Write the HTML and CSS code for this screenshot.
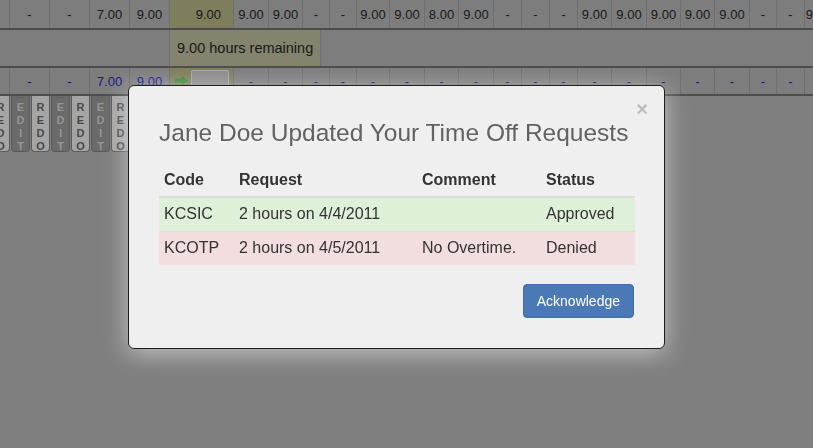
FILE: index.html
```html
<!DOCTYPE html>
<html lang="en">
<head>
    <meta charset="UTF-8">
    <meta name="viewport" content="width=device-width, initial-scale=1.0">
    <title>Timesheet</title>
    <link rel="stylesheet" href="styles.css">
</head>
<body>
    <div class="sheet">
        <div class="hours-row">
            <div class="cell"></div>
            <div class="cell">-</div>
            <div class="cell">-</div>
            <div class="cell">7.00</div>
            <div class="cell">9.00</div>
            <div class="cell today">9.00</div>
            <div class="cell">9.00</div>
            <div class="cell">9.00</div>
            <div class="cell">-</div>
            <div class="cell">-</div>
            <div class="cell">9.00</div>
            <div class="cell">9.00</div>
            <div class="cell">8.00</div>
            <div class="cell">9.00</div>
            <div class="cell">-</div>
            <div class="cell">-</div>
            <div class="cell">-</div>
            <div class="cell">9.00</div>
            <div class="cell">9.00</div>
            <div class="cell">9.00</div>
            <div class="cell">9.00</div>
            <div class="cell">9.00</div>
            <div class="cell">-</div>
            <div class="cell">-</div>
            <div class="cell">9.00</div>
        </div>

        <div class="remaining-row">
            <div class="cell spacer"></div>
            <div class="cell remaining">9.00 hours remaining</div>
            <div class="cell rest"></div>
        </div>

        <div class="hours-row entry">
            <div class="cell"></div>
            <div class="cell">-</div>
            <div class="cell">-</div>
            <div class="cell">7.00</div>
            <div class="cell">9.00</div>
            <div class="cell today">
                <svg class="arrow" width="13" height="9" viewBox="0 0 13 9">
                    <polygon points="0,2.5 7,2.5 7,0 13,4.5 7,9 7,6.5 0,6.5" fill="#53c553"/>
                </svg>
                <input type="text" class="hour-input">
            </div>
            <div class="cell">-</div>
            <div class="cell">-</div>
            <div class="cell">-</div>
            <div class="cell">-</div>
            <div class="cell">-</div>
            <div class="cell">-</div>
            <div class="cell">-</div>
            <div class="cell">-</div>
            <div class="cell">-</div>
            <div class="cell">-</div>
            <div class="cell">-</div>
            <div class="cell">-</div>
            <div class="cell">-</div>
            <div class="cell">-</div>
            <div class="cell">-</div>
            <div class="cell">-</div>
            <div class="cell">-</div>
            <div class="cell">-</div>
            <div class="cell">-</div>
        </div>

        <div class="button-row">
            <button class="sheet-btn redo"><span>REDO</span></button>
            <button class="sheet-btn edit"><span>EDIT</span></button>
            <button class="sheet-btn redo"><span>REDO</span></button>
            <button class="sheet-btn edit"><span>EDIT</span></button>
            <button class="sheet-btn redo"><span>REDO</span></button>
            <button class="sheet-btn edit"><span>EDIT</span></button>
            <button class="sheet-btn redo"><span>REDO</span></button>
            <button class="sheet-btn edit"><span>EDIT</span></button>
            <button class="sheet-btn redo"><span>REDO</span></button>
            <button class="sheet-btn edit"><span>EDIT</span></button>
            <button class="sheet-btn redo"><span>REDO</span></button>
        </div>
    </div>

    <div class="backdrop"></div>

    <div class="modal">
        <button class="close">&times;</button>
        <h3>Jane Doe Updated Your Time Off Requests</h3>
        <table class="requests">
            <colgroup>
                <col class="col-code">
                <col class="col-request">
                <col class="col-comment">
                <col class="col-status">
            </colgroup>
            <thead>
                <tr>
                    <th>Code</th>
                    <th>Request</th>
                    <th>Comment</th>
                    <th>Status</th>
                </tr>
            </thead>
            <tbody>
                <tr class="approved">
                    <td>KCSIC</td>
                    <td>2 hours on 4/4/2011</td>
                    <td></td>
                    <td>Approved</td>
                </tr>
                <tr class="denied">
                    <td>KCOTP</td>
                    <td>2 hours on 4/5/2011</td>
                    <td>No Overtime.</td>
                    <td>Denied</td>
                </tr>
            </tbody>
        </table>
        <div class="modal-footer">
            <button class="btn-primary">Acknowledge</button>
        </div>
    </div>
</body>
</html>
```

FILE: styles.css
```css
body {
    margin: 0;
    height: 448px;
    overflow: hidden;
    background-color: #b7b7b7;
    font-family: "Liberation Sans", Arial, sans-serif;
}

.sheet {
    width: 900px;
}

.hours-row {
    display: grid;
    grid-template-columns: 10px 40px 40px 40px 40px 64px 35px 34px 27px 27px 33px 35px 34px 35px 28px 28px 28px 34px 35px 34px 34px 35px 27px 28px 28px;
    height: 28px;
    background: #b3b3b3;
    border-bottom: 2px solid #6e6e6e;
}

.cell {
    box-sizing: border-box;
    border-right: 1px solid #9e9e9e;
    display: flex;
    align-items: center;
    justify-content: center;
    font-size: 13px;
    color: #282828;
    white-space: nowrap;
    overflow: hidden;
}

.cell.today {
    background: #b5b586;
    justify-content: flex-end;
    padding-right: 12px;
}

.remaining-row {
    display: flex;
    height: 36px;
    background: #b3b3b3;
    border-bottom: 2px solid #6e6e6e;
}

.remaining-row .spacer {
    width: 170px;
}

.remaining-row .remaining {
    width: 151px;
    justify-content: flex-start;
    padding-left: 7px;
    background: #bcbc9e;
    font-size: 14.5px;
}

.remaining-row .rest {
    flex: 1;
    border-right: none;
}

.entry {
    height: 26px;
}

.entry .cell {
    color: #2424c8;
}

.entry .cell.today {
    justify-content: flex-start;
    align-items: flex-start;
    padding: 2px 0 0 5px;
}

.arrow {
    margin: 6px 3px 0 0;
}

.hour-input {
    box-sizing: border-box;
    width: 38px;
    height: 20px;
    margin: 0;
    border: 1px solid #eeeeee;
    border-radius: 2px;
    background: #c7c7c7;
}

.button-row {
    display: flex;
    gap: 1px;
    margin-left: -9px;
}

.sheet-btn {
    box-sizing: border-box;
    width: 19px;
    height: 56px;
    margin: 0;
    padding: 5px 0 0 0;
    border: 1px solid #818181;
    border-top: none;
    border-radius: 0 0 4px 4px;
    display: flex;
    flex-direction: column;
    align-items: center;
    font-family: "Liberation Sans", Arial, sans-serif;
    font-size: 11px;
    font-weight: bold;
}

.sheet-btn span {
    writing-mode: vertical-lr;
    text-orientation: upright;
    letter-spacing: 1px;
}

.sheet-btn.edit {
    background: #989898;
    color: #d6d6d6;
}

.sheet-btn.redo {
    background: #ededed;
    color: #6a6a6a;
}

.backdrop {
    position: fixed;
    top: 0;
    left: 0;
    right: 0;
    bottom: 0;
    background: rgba(0, 0, 0, 0.3);
}

.modal {
    position: absolute;
    left: 128px;
    top: 85px;
    width: 537px;
    box-sizing: border-box;
    padding: 30px;
    background: #efefef;
    border: 1px solid #1e1e1e;
    border-radius: 6px;
    box-shadow: 0 4px 24px rgba(255, 255, 255, 0.55);
}

.modal h3 {
    margin: 0 0 14px 0;
    font-size: 24.5px;
    line-height: 34px;
    font-weight: normal;
    color: #626262;
}

.close {
    position: absolute;
    top: 13px;
    right: 16px;
    padding: 0;
    border: none;
    background: none;
    font-family: "Liberation Sans", Arial, sans-serif;
    font-size: 20px;
    font-weight: bold;
    line-height: 20px;
    color: #bdbdbd;
    cursor: pointer;
}

.requests {
    width: 100%;
    table-layout: fixed;
    border-collapse: collapse;
    font-size: 16px;
    color: #333333;
}

.col-code { width: 75px; }
.col-request { width: 183px; }
.col-comment { width: 124px; }
.col-status { width: 94px; }

.requests th {
    text-align: left;
    padding: 6px 5px;
    line-height: 20px;
    border-bottom: 2px solid #dddddd;
}

.requests td {
    padding: 6px 5px 7px 5px;
    line-height: 20px;
    border-top: 1px solid #dddddd;
}

.requests tbody tr:first-child td {
    border-top: none;
}

.approved td {
    background: #dff0d8;
}

.denied td {
    background: #f2dede;
}

.modal-footer {
    margin-top: 19px;
    text-align: right;
}

.btn-primary {
    padding: 7px 13px 6px 13px;
    border: 1px solid #3f6ca6;
    border-radius: 4px;
    background: #4a79b5;
    color: #ffffff;
    font-family: "Liberation Sans", Arial, sans-serif;
    font-size: 14px;
    line-height: 19px;
    cursor: pointer;
}
```
